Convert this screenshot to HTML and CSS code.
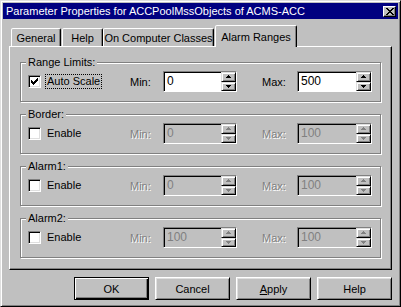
FILE: index.html
```html
<!DOCTYPE html>
<html lang="en">
<head>
    <meta charset="UTF-8">
    <title>Parameter Properties</title>
    <link rel="stylesheet" href="styles.css">
</head>
<body>
    <div class="window">
        <div class="titlebar">
            <span class="title">Parameter Properties for ACCPoolMssObjects of ACMS-ACC</span>
            <span class="close-btn">
                <svg width="8" height="7" viewBox="0 0 8 7" shape-rendering="crispEdges"><path d="M0 0h2v1H0z M6 0h2v1H6z M1 1h2v1H1z M5 1h2v1H5z M2 2h4v1H2z M3 3h2v1H3z M2 4h4v1H2z M1 5h2v1H1z M5 5h2v1H5z M0 6h2v1H0z M6 6h2v1H6z" fill="#000"/></svg>
            </span>
        </div>

        <div class="dialog">
            <div class="tabs">
                <div class="tab tab-general">General</div>
                <div class="tab tab-help">Help</div>
                <div class="tab tab-classes">On Computer Classes</div>
                <div class="tab tab-alarm active">Alarm Ranges</div>
            </div>

            <div class="panel">
                <!-- Range Limits -->
                <div class="group">
                    <div class="group-title">Range Limits:</div>
                    <div class="group-row">
                        <div class="check-cell">
                            <span class="checkbox">
                                <svg width="7" height="7" viewBox="0 0 7 7" shape-rendering="crispEdges"><path d="M6 0h1v1H6z M5 1h2v1H5z M0 2h1v1H0z M4 2h3v1H4z M0 3h2v1H0z M3 3h3v1H3z M0 4h5v1H0z M1 5h3v1H1z M2 6h1v1H2z" fill="#000"/></svg>
                            </span>
                            <span class="check-label focused">Auto Scale</span>
                        </div>
                        <span class="field-label">Min:</span>
                        <div class="spin-field">
                            <span class="value">0</span>
                            <span class="spinner">
                                <span class="spin-btn"><svg width="5" height="3" viewBox="0 0 5 3" shape-rendering="crispEdges"><path d="M2 0h1v1h1v1h1v1H0V2h1V1h1z"/></svg></span>
                                <span class="spin-btn"><svg width="5" height="3" viewBox="0 0 5 3" shape-rendering="crispEdges"><path d="M0 0h5v1H4v1H3v1H2V2H1V1H0z"/></svg></span>
                            </span>
                        </div>
                        <span class="field-label max-label">Max:</span>
                        <div class="spin-field wide">
                            <span class="value">500</span>
                            <span class="spinner">
                                <span class="spin-btn"><svg width="5" height="3" viewBox="0 0 5 3" shape-rendering="crispEdges"><path d="M2 0h1v1h1v1h1v1H0V2h1V1h1z"/></svg></span>
                                <span class="spin-btn"><svg width="5" height="3" viewBox="0 0 5 3" shape-rendering="crispEdges"><path d="M0 0h5v1H4v1H3v1H2V2H1V1H0z"/></svg></span>
                            </span>
                        </div>
                    </div>
                </div>

                <!-- Border -->
                <div class="group">
                    <div class="group-title">Border:</div>
                    <div class="group-row">
                        <div class="check-cell">
                            <span class="checkbox"></span>
                            <span class="check-label">Enable</span>
                        </div>
                        <span class="field-label disabled">Min:</span>
                        <div class="spin-field disabled">
                            <span class="value">0</span>
                            <span class="spinner">
                                <span class="spin-btn"><svg width="5" height="3" viewBox="0 0 5 3" shape-rendering="crispEdges"><path d="M2 0h1v1h1v1h1v1H0V2h1V1h1z"/></svg></span>
                                <span class="spin-btn"><svg width="5" height="3" viewBox="0 0 5 3" shape-rendering="crispEdges"><path d="M0 0h5v1H4v1H3v1H2V2H1V1H0z"/></svg></span>
                            </span>
                        </div>
                        <span class="field-label max-label disabled">Max:</span>
                        <div class="spin-field wide disabled">
                            <span class="value">100</span>
                            <span class="spinner">
                                <span class="spin-btn"><svg width="5" height="3" viewBox="0 0 5 3" shape-rendering="crispEdges"><path d="M2 0h1v1h1v1h1v1H0V2h1V1h1z"/></svg></span>
                                <span class="spin-btn"><svg width="5" height="3" viewBox="0 0 5 3" shape-rendering="crispEdges"><path d="M0 0h5v1H4v1H3v1H2V2H1V1H0z"/></svg></span>
                            </span>
                        </div>
                    </div>
                </div>

                <!-- Alarm1 -->
                <div class="group">
                    <div class="group-title">Alarm1:</div>
                    <div class="group-row">
                        <div class="check-cell">
                            <span class="checkbox"></span>
                            <span class="check-label">Enable</span>
                        </div>
                        <span class="field-label disabled">Min:</span>
                        <div class="spin-field disabled">
                            <span class="value">0</span>
                            <span class="spinner">
                                <span class="spin-btn"><svg width="5" height="3" viewBox="0 0 5 3" shape-rendering="crispEdges"><path d="M2 0h1v1h1v1h1v1H0V2h1V1h1z"/></svg></span>
                                <span class="spin-btn"><svg width="5" height="3" viewBox="0 0 5 3" shape-rendering="crispEdges"><path d="M0 0h5v1H4v1H3v1H2V2H1V1H0z"/></svg></span>
                            </span>
                        </div>
                        <span class="field-label max-label disabled">Max:</span>
                        <div class="spin-field wide disabled">
                            <span class="value">100</span>
                            <span class="spinner">
                                <span class="spin-btn"><svg width="5" height="3" viewBox="0 0 5 3" shape-rendering="crispEdges"><path d="M2 0h1v1h1v1h1v1H0V2h1V1h1z"/></svg></span>
                                <span class="spin-btn"><svg width="5" height="3" viewBox="0 0 5 3" shape-rendering="crispEdges"><path d="M0 0h5v1H4v1H3v1H2V2H1V1H0z"/></svg></span>
                            </span>
                        </div>
                    </div>
                </div>

                <!-- Alarm2 -->
                <div class="group">
                    <div class="group-title">Alarm2:</div>
                    <div class="group-row">
                        <div class="check-cell">
                            <span class="checkbox"></span>
                            <span class="check-label">Enable</span>
                        </div>
                        <span class="field-label disabled">Min:</span>
                        <div class="spin-field disabled">
                            <span class="value">100</span>
                            <span class="spinner">
                                <span class="spin-btn"><svg width="5" height="3" viewBox="0 0 5 3" shape-rendering="crispEdges"><path d="M2 0h1v1h1v1h1v1H0V2h1V1h1z"/></svg></span>
                                <span class="spin-btn"><svg width="5" height="3" viewBox="0 0 5 3" shape-rendering="crispEdges"><path d="M0 0h5v1H4v1H3v1H2V2H1V1H0z"/></svg></span>
                            </span>
                        </div>
                        <span class="field-label max-label disabled">Max:</span>
                        <div class="spin-field wide disabled">
                            <span class="value">100</span>
                            <span class="spinner">
                                <span class="spin-btn"><svg width="5" height="3" viewBox="0 0 5 3" shape-rendering="crispEdges"><path d="M2 0h1v1h1v1h1v1H0V2h1V1h1z"/></svg></span>
                                <span class="spin-btn"><svg width="5" height="3" viewBox="0 0 5 3" shape-rendering="crispEdges"><path d="M0 0h5v1H4v1H3v1H2V2H1V1H0z"/></svg></span>
                            </span>
                        </div>
                    </div>
                </div>
            </div>

            <div class="buttons">
                <div class="btn default">OK</div>
                <div class="btn">Cancel</div>
                <div class="btn"><u>A</u>pply</div>
                <div class="btn">Help</div>
            </div>
        </div>
    </div>
</body>
</html>
```

FILE: styles.css
```css
/* Base */
* {
    margin: 0;
    padding: 0;
    box-sizing: border-box;
}

body {
    font-family: "Liberation Sans", Arial, sans-serif;
    font-size: 11px;
    background-color: #c0c0c0;
    color: #000;
}

/* Window frame */
.window {
    width: 401px;
    height: 307px;
    padding: 2px;
    background-color: #c0c0c0;
    border: 1px solid;
    border-color: #dfdfdf #000 #000 #dfdfdf;
    box-shadow: inset 1px 1px 0 #fff, inset -1px -1px 0 #808080;
}

.titlebar {
    height: 16px;
    background-color: #000080;
    color: #fff;
    display: flex;
    align-items: center;
    justify-content: space-between;
    padding: 0 2px 0 3px;
}

.title {
    font-size: 11px;
    white-space: nowrap;
}

.close-btn {
    width: 13px;
    height: 11px;
    display: flex;
    align-items: center;
    justify-content: center;
    background-color: #c0c0c0;
    border: 1px solid;
    border-color: #fff #000 #000 #fff;
    box-shadow: inset -1px -1px 0 #808080;
}

/* Dialog body */
.dialog {
    padding: 7px 6px 0 6px;
}

/* Tabs */
.tabs {
    display: flex;
    align-items: flex-end;
    height: 20px;
    padding-left: 2px;
}

.tab {
    height: 18px;
    display: flex;
    align-items: center;
    justify-content: center;
    background-color: #c0c0c0;
    border: 1px solid;
    border-bottom: none;
    border-color: #fff #000 transparent #fff;
    border-radius: 2px 2px 0 0;
    box-shadow: inset -1px 0 0 #808080;
}

.tab-general { width: 50px; }
.tab-help { width: 41px; margin-left: 1px; }
.tab-classes { width: 111px; }

.tab-alarm {
    width: 82px;
    margin-left: 1px;
}

.tab.active {
    position: relative;
    height: 22px;
    margin-bottom: -1px;
}

/* Tab page */
.panel {
    height: 224px;
    padding: 15px 10px 0 10px;
    border: 1px solid;
    border-color: #fff #000 #000 #fff;
    box-shadow: inset -1px -1px 0 #808080;
}

/* Group boxes */
.group {
    height: 40px;
    margin-bottom: 12px;
    padding: 0 7px;
    border: 1px solid #808080;
    box-shadow: inset 1px 1px 0 #fff, 1px 1px 0 #fff;
}

.group-title {
    display: table;
    margin: -7px 0 0 -2px;
    padding: 0 2px;
    line-height: 13px;
    background-color: #c0c0c0;
}

.group-row {
    display: flex;
    align-items: center;
    height: 21px;
    margin-top: 2px;
}

.check-cell {
    width: 102px;
    display: flex;
    align-items: center;
}

.checkbox {
    width: 13px;
    height: 13px;
    display: flex;
    align-items: center;
    justify-content: center;
    background-color: #fff;
    border: 1px solid;
    border-color: #808080 #fff #fff #808080;
    box-shadow: inset 1px 1px 0 #000, inset -1px -1px 0 #dfdfdf;
}

.check-label {
    margin-left: 4px;
    padding: 0 1px;
    line-height: 13px;
    border: 1px solid transparent;
}

.check-label.focused {
    border: 1px dotted #000;
}

.field-label {
    width: 33px;
}

.max-label {
    width: 35px;
    margin-left: 25px;
}

.disabled {
    color: #808080;
    text-shadow: 1px 1px 0 #fff;
}

/* Spin edit fields */
.spin-field {
    width: 74px;
    height: 21px;
    display: flex;
    background-color: #fff;
    border: 1px solid;
    border-color: #808080 #fff #fff #808080;
    box-shadow: inset 1px 1px 0 #000;
}

.spin-field.wide {
    width: 75px;
}

.spin-field .value {
    flex: 1;
    padding: 1px 0 0 3px;
    font-size: 12px;
    line-height: 17px;
}

.spin-field.disabled {
    background-color: #c0c0c0;
    text-shadow: none;
}

.spinner {
    width: 15px;
    display: flex;
    flex-direction: column;
}

.spin-btn {
    flex: 1;
    display: flex;
    align-items: center;
    justify-content: center;
    background-color: #c0c0c0;
    border: 1px solid;
    border-color: #dfdfdf #000 #000 #dfdfdf;
    box-shadow: inset 1px 1px 0 #fff, inset -1px -1px 0 #808080;
}

.spin-btn svg {
    fill: #000;
}

.spin-field.disabled .spin-btn svg {
    fill: #808080;
}

/* Bottom buttons */
.buttons {
    display: flex;
    justify-content: flex-end;
    gap: 6px;
    margin-top: 7px;
}

.btn {
    width: 75px;
    height: 23px;
    display: flex;
    align-items: center;
    justify-content: center;
    background-color: #c0c0c0;
    border: 1px solid;
    border-color: #fff #000 #000 #fff;
    box-shadow: inset 1px 1px 0 #dfdfdf, inset -1px -1px 0 #808080;
}

.btn.default {
    border-color: #000;
    box-shadow: inset 1px 1px 0 #fff, inset -1px -1px 0 #000, inset -2px -2px 0 #808080;
}
```
